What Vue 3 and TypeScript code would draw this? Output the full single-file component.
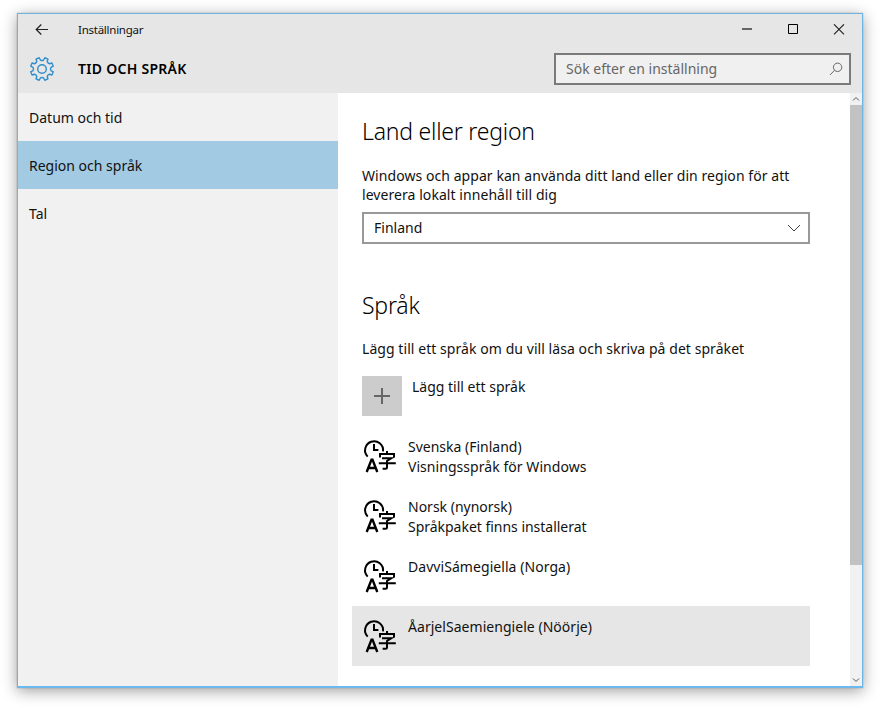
<script setup lang="ts">
import { ref } from 'vue'

interface Language {
  name: string
  status?: string
  nameSpacing: string
  statusSpacing?: string
}

const sections = ['Datum och tid', 'Region och språk', 'Tal']
const activeSection = ref(1)

const languages: Language[] = [
  { name: 'Svenska (Finland)', status: 'Visningsspråk för Windows', nameSpacing: '0px', statusSpacing: '0.05px' },
  { name: 'Norsk (nynorsk)', status: 'Språkpaket finns installerat', nameSpacing: '0px', statusSpacing: '-0.02px' },
  { name: 'DavviSámegiella (Norga)', nameSpacing: '0.06px' },
  { name: 'ÅarjelSaemiengiele (Nöörje)', nameSpacing: '0.04px' },
]
const selectedLanguage = ref(3)

function gearPath(cx: number, cy: number, teeth: number, outer: number, inner: number): string {
  const step = 360 / teeth
  const point = (radius: number, deg: number): string => {
    const a = (deg * Math.PI) / 180
    return `${(cx + radius * Math.cos(a)).toFixed(2)} ${(cy + radius * Math.sin(a)).toFixed(2)}`
  }
  let d = ''
  for (let i = 0; i < teeth; i++) {
    const mid = step / 2 + i * step
    d += `${i === 0 ? 'M' : 'L'}${point(inner + 0.7, mid - 12.5)}L${point(outer, mid - 8.5)}`
    d += `L${point(outer, mid + 8.5)}L${point(inner + 0.7, mid + 12.5)}`
    d += `A3.2 3.2 0 0 0 ${point(inner + 0.7, mid + step - 12.5)}`
  }
  return d + 'Z'
}
const gear = gearPath(13, 13, 8, 11.6, 8.4)
</script>

<template>
  <div class="desktop">
    <main class="window">
      <header class="header">
        <div class="titlebar">
          <svg class="back" width="14" height="12" viewBox="0 0 14 12"><path d="M13 5.5H1.2M6.3 .5L1.2 5.5l5.1 5" /></svg>
          <span class="app-name">Inställningar</span>
          <div class="controls">
            <svg width="12" height="12" viewBox="0 0 12 12"><path class="minimize" d="M1 5H11" /></svg>
            <svg width="12" height="12" viewBox="0 0 12 12"><path class="maximize" d="M1.5 .5h9v9h-9z" /></svg>
            <svg width="12" height="12" viewBox="0 0 12 12"><path class="close" d="M1 .3l10 10M11 .3L1 10.3" /></svg>
          </div>
        </div>
        <div class="toolbar">
          <svg class="gear" width="26" height="26" viewBox="0 0 26 26">
            <path :d="gear" />
            <circle cx="13" cy="13" r="4.3" />
          </svg>
          <h1>TID OCH SPRÅK</h1>
          <div class="search">
            <span>Sök efter en inställning</span>
            <svg width="14" height="14" viewBox="0 0 14 14"><circle cx="8.6" cy="5.3" r="4.2" /><path d="M5.6 8.3L1 12.9" /></svg>
          </div>
        </div>
      </header>

      <div class="body">
        <nav class="sidebar">
          <a
            v-for="(section, i) in sections"
            :key="section"
            :class="['section', { active: i === activeSection }]"
            @click="activeSection = i"
          >{{ section }}</a>
        </nav>

        <section class="content">
          <h2>Land eller region</h2>
          <p class="region-text">
            Windows och appar kan använda ditt land eller din region för att<br>
            leverera lokalt innehåll till dig
          </p>
          <div class="select">
            <span>Finland</span>
            <svg width="14" height="8" viewBox="0 0 14 8"><path d="M1 1l6 6 6-6" /></svg>
          </div>

          <h2 class="language-title">Språk</h2>
          <p class="language-text">Lägg till ett språk om du vill läsa och skriva på det språket</p>
          <div class="add">
            <span class="add-box"><svg width="18" height="18" viewBox="0 0 18 18"><path d="M1 9h16M9 1v16" /></svg></span>
            <span class="add-label">Lägg till ett språk</span>
          </div>

          <ul class="languages">
            <li
              v-for="(language, i) in languages"
              :key="language.name"
              :class="{ selected: i === selectedLanguage }"
              @click="selectedLanguage = i"
            >
              <svg class="language-icon" width="34" height="36" viewBox="0 0 34 36">
                <path class="clock" d="M4.7 19.6A9 9 0 1 1 20 14.4" />
                <path class="hands" d="M11 7v6h4.4" />
                <path class="letter" d="M3.7 35L8.5 22.6h1L14.3 35M5.6 31h6.8" />
                <path class="hanzi" d="M24 14v3M17 20.4V17h14v3.4M19 21.2h9.4l-4.4 2.8v6.4q0 1.4-1.4 1.4h-3M15.8 26.2h17" />
              </svg>
              <div class="language-label">
                <div :style="{ letterSpacing: language.nameSpacing }">{{ language.name }}</div>
                <div v-if="language.status" :style="{ letterSpacing: language.statusSpacing }">{{ language.status }}</div>
              </div>
            </li>
          </ul>
        </section>

        <div class="scrollbar">
          <svg width="8" height="12" viewBox="0 0 8 12"><path d="M1 7.5l3-3 3 3" /></svg>
          <div class="thumb"></div>
          <svg class="down" width="8" height="12" viewBox="0 0 8 12"><path d="M1 4.5l3 3 3-3" /></svg>
        </div>
      </div>
    </main>
  </div>
</template>

<style>
body {
  background: #fff;
  overflow: hidden;
}
</style>

<style scoped>
* {
  box-sizing: border-box;
}
.desktop {
  width: 880px;
  height: 708px;
  padding: 13px 17px 20px;
  font-family: 'Noto Sans', 'Open Sans', sans-serif;
  font-size: 14px;
  line-height: 20px;
  color: #111;
}
.window {
  display: flex;
  flex-direction: column;
  width: 846px;
  height: 675px;
  border: 1px solid #6fb5e2;
  border-bottom-width: 2px;
  border-bottom-color: #6cb9ee;
  box-shadow: 0 0 1px rgba(0, 0, 0, 0.35), 0 3px 14px rgba(0, 0, 0, 0.38);
}
svg {
  display: block;
  fill: none;
  flex: none;
}
.header {
  height: 79px;
  background: #e6e6e6;
}
.titlebar {
  display: flex;
  align-items: center;
  height: 31px;
  padding-left: 17px;
}
.back {
  stroke: #222;
  stroke-width: 1.2;
}
.app-name {
  margin-left: 29px;
  font-size: 11.5px;
  letter-spacing: -0.25px;
}
.controls {
  display: flex;
  gap: 34px;
  margin-left: auto;
  margin-right: 17px;
}
.minimize {
  stroke: #666;
  stroke-width: 2;
}
.maximize {
  stroke: #000;
}
.close {
  stroke: #222;
  stroke-width: 1.1;
}
.toolbar {
  display: flex;
  align-items: center;
  height: 48px;
  padding: 0 11px;
}
.gear {
  stroke: #2f8fcd;
  stroke-width: 1.4;
  stroke-linejoin: round;
}
h1 {
  margin: 0 0 0 23px;
  font-size: 14px;
  font-weight: 600;
  letter-spacing: 0.28px;
  color: #000;
}
.search {
  display: flex;
  align-items: center;
  justify-content: space-between;
  width: 297px;
  height: 32px;
  margin-left: auto;
  padding: 0 6px 0 10px;
  border: 2px solid #7a7a7a;
  background: #f0f0f0;
  color: #666;
}
.search svg {
  stroke: #666;
}
.body {
  display: flex;
  flex: 1;
  min-height: 0;
}
.sidebar {
  width: 320px;
  background: #f1f1f1;
}
.section {
  display: block;
  height: 48px;
  padding-left: 11px;
  line-height: 49px;
}
.section.active {
  background: #a2cae3;
}
.content {
  flex: 1;
  padding: 21px 0 0 24px;
  background: #fff;
  overflow: hidden;
}
h2 {
  margin: 0;
  font-size: 23px;
  line-height: 34px;
  font-weight: 300;
  letter-spacing: -0.22px;
  color: #000;
}
p {
  margin: 0;
  white-space: nowrap;
  letter-spacing: 0.062px;
}
.region-text {
  margin-top: 18px;
  line-height: 19px;
}
.select {
  display: flex;
  align-items: center;
  justify-content: space-between;
  width: 448px;
  height: 32px;
  margin-top: 8px;
  padding: 0 7px 0 10px;
  border: 2px solid #999;
}
.select svg {
  stroke: #444;
}
.language-title {
  margin-top: 44px;
}
.language-text {
  margin-top: 17px;
}
.add {
  display: flex;
  height: 40px;
  margin-top: 17px;
}
.add-box {
  display: grid;
  place-items: center;
  width: 40px;
  height: 40px;
  background: #ccc;
}
.add-box path {
  stroke: #666;
  stroke-width: 2;
}
.add-label {
  margin: 1px 0 0 10px;
}
.languages {
  width: 458px;
  margin: 10px 0 0 -10px;
  padding: 0;
  list-style: none;
}
li {
  display: flex;
  height: 60px;
  padding: 11px 0 0 11px;
}
li.selected {
  background: #e6e6e6;
}
.language-icon {
  stroke: #000;
  stroke-width: 2;
}
.letter {
  stroke-width: 2.4;
}
.language-label {
  margin-left: 11px;
  white-space: nowrap;
}
.scrollbar {
  display: flex;
  flex-direction: column;
  align-items: center;
  width: 12px;
  background: #f1f1f1;
}
.scrollbar svg {
  stroke: #555;
}
.thumb {
  width: 12px;
  height: 460px;
  background: #c2c2c2;
}
.down {
  margin-top: auto;
}
</style>
